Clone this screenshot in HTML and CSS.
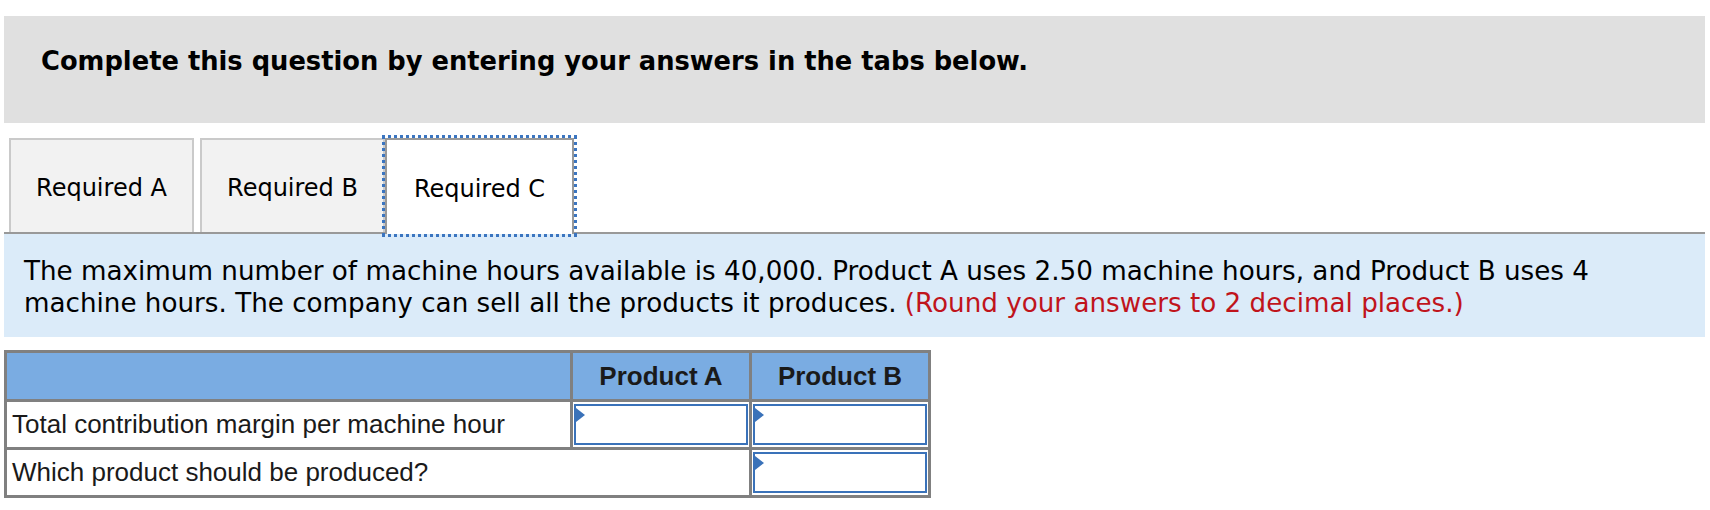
FILE: index.html
```html
<!DOCTYPE html>
<html>
<head>
<meta charset="utf-8">
<link rel="stylesheet" href="styles.css">
</head>
<body>
<div class="page">
  <div class="banner">Complete this question by entering your answers in the tabs below.</div>
  <div class="tabbar">
    <div class="tab">Required A</div>
    <div class="tab">Required B</div>
    <div class="tab active">Required C</div>
  </div>
  <div class="info">The maximum number of machine hours available is 40,000. Product A uses 2.50 machine hours, and Product B uses 4 machine hours. The company can sell all the products it produces. <span class="red">(Round your answers to 2 decimal places.)</span></div>
  <table class="grid">
    <tr class="head">
      <th class="label"></th>
      <th class="col">Product A</th>
      <th class="col">Product B</th>
    </tr>
    <tr>
      <td class="label">Total contribution margin per machine hour</td>
      <td class="cell"><div class="input"></div></td>
      <td class="cell"><div class="input"></div></td>
    </tr>
    <tr>
      <td class="label" colspan="2">Which product should be produced?</td>
      <td class="cell"><div class="input"></div></td>
    </tr>
  </table>
</div>
</body>
</html>
```
FILE: styles.css
```css
html, body { margin: 0; padding: 0; background: #fff; }
.page { padding: 16px 5px 0 4px; font-family: "DejaVu Sans", Verdana, sans-serif; color: #000; }
.banner {
  background: #e0e0e0;
  height: 107px;
  box-sizing: border-box;
  padding: 30px 0 0 37px;
  font-weight: bold;
  font-size: 25.75px;
  line-height: 30px;
}
.tabbar {
  display: flex;
  margin-top: 11px;
  padding: 4px 0 0 5px;
  gap: 6px;
  border-bottom: 2px solid #999;
}
.tab {
  width: 185px;
  height: 94px;
  box-sizing: border-box;
  border: 2px solid #cacaca;
  border-bottom: none;
  background: #f2f2f2;
  display: flex;
  align-items: center;
  justify-content: center;
  padding-top: 3px;
  font-size: 24px;
  color: #000;
}
.tab.active {
  background: #fff;
  border-color: #999;
  margin-left: -6px;
  width: 189px;
  outline: 3px dotted #3b75c0;
  outline-offset: 0px;
  position: relative;
  top: 2px;
  margin-top: -2px;
  height: 96px;
}
.info {
  background: #dbebf9;
  padding: 21px 90px 18px 20px;
  font-size: 26.2px;
  line-height: 32px;
}
.red { color: #c0141c; }
.grid {
  margin-top: 13px;
  border-collapse: collapse;
  font-family: "Liberation Sans", Arial, sans-serif;
  border: 3px solid #808080;
}
.grid th, .grid td { border: 3px solid #808080; padding: 0; }
.head th { background: #7aace2; height: 46px; font-size: 26px; font-weight: bold; color: #1a1a1a; }
.grid th.label { width: 563px; }
.grid th.col { width: 176px; }
.grid td.label { font-size: 26px; color: #1a1a1a; padding-left: 5px; height: 43px; text-align: left; }
.grid td.cell { padding: 1px; height: 43px; }
.input {
  position: relative;
  height: 41px;
  border: 2px solid #3a72b9;
  box-sizing: border-box;
  background: #fff;
}
.input::before {
  content: "";
  position: absolute;
  left: 0;
  top: 2px;
  border-left: 9px solid #3a72b9;
  border-top: 7px solid transparent;
  border-bottom: 7px solid transparent;
}
```
